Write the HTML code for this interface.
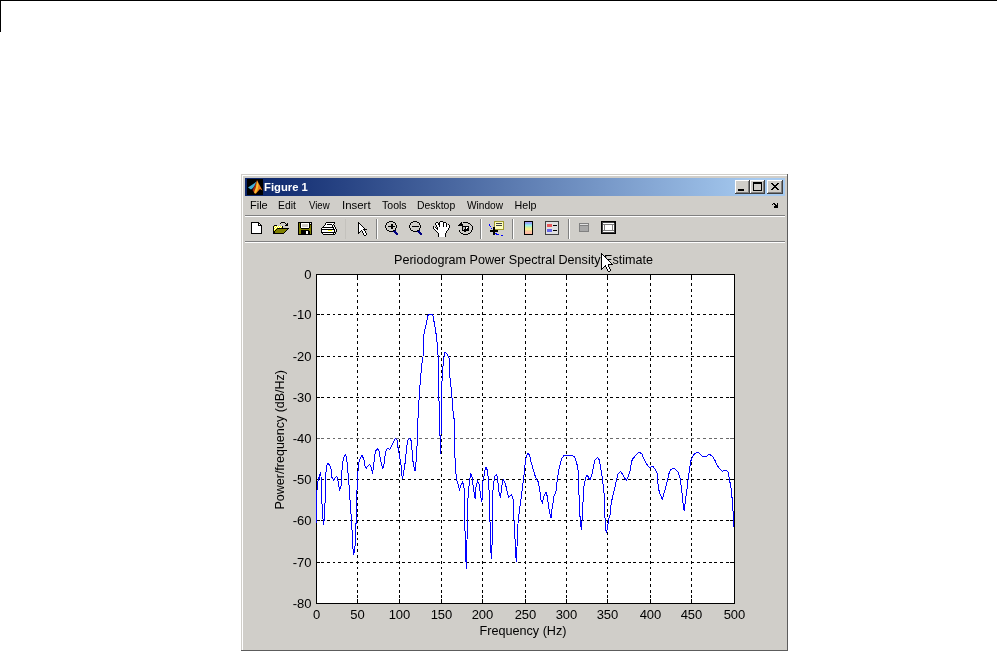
<!DOCTYPE html>
<html><head><meta charset="utf-8">
<style>
html,body{margin:0;padding:0;background:#fff;width:997px;height:651px;overflow:hidden;font-family:"Liberation Sans",sans-serif;}
svg{position:absolute;left:0;top:0;will-change:transform;}
</style></head><body>
<svg width="997" height="651" viewBox="0 0 997 651">
<rect x="0" y="0" width="997" height="1" fill="#000"/>
<rect x="0" y="0" width="1" height="32" fill="#000"/>
<rect x="241" y="174" width="547" height="477" fill="#d0cec9"/>
<rect x="242" y="175" width="545" height="1" fill="#fff"/>
<rect x="242" y="175" width="1" height="475" fill="#fff"/>
<rect x="787" y="174" width="1" height="477" fill="#5c5c5c"/>
<rect x="241" y="650" width="547" height="1" fill="#5c5c5c"/>
<defs><linearGradient id="tg" x1="0" x2="1" y1="0" y2="0"><stop offset="0" stop-color="#0a246a"/><stop offset="0.95" stop-color="#a6caf0"/><stop offset="1" stop-color="#a6caf0"/></linearGradient></defs>
<rect x="245" y="178" width="540" height="18" fill="url(#tg)"/>
<rect x="247" y="179" width="16" height="16" fill="#000"/>
<path d="M248 187.5 L251 185.5 L254 183.5 L256.5 181.5 L255.5 184.5 L253 188 L251 189.5 Z" fill="#40b0d8"/>
<path d="M257 180 L255 185 L252.5 190 L254.5 193.5 L256 188 Z" fill="#a82810"/>
<path d="M257 180 L259 184 L262.5 190.5 L260 189 L256 193.5 L254.5 193.5 L256 188 Z" fill="#f07818"/>
<path d="M257 181 L258.5 185 L257.5 190 L255.5 193.5 L254 192.5 L256 187 Z" fill="#f8c030"/>
<rect x="735" y="180" width="15" height="14" fill="#d0cec9"/>
<rect x="735" y="180" width="14" height="1" fill="#fff"/>
<rect x="735" y="180" width="1" height="13" fill="#fff"/>
<rect x="749" y="180" width="1" height="14" fill="#404040"/>
<rect x="735" y="193" width="15" height="1" fill="#404040"/>
<rect x="748" y="181" width="1" height="12" fill="#808080"/>
<rect x="736" y="192" width="13" height="1" fill="#808080"/>
<rect x="750" y="180" width="15" height="14" fill="#d0cec9"/>
<rect x="750" y="180" width="14" height="1" fill="#fff"/>
<rect x="750" y="180" width="1" height="13" fill="#fff"/>
<rect x="764" y="180" width="1" height="14" fill="#404040"/>
<rect x="750" y="193" width="15" height="1" fill="#404040"/>
<rect x="763" y="181" width="1" height="12" fill="#808080"/>
<rect x="751" y="192" width="13" height="1" fill="#808080"/>
<rect x="767" y="180" width="16" height="14" fill="#d0cec9"/>
<rect x="767" y="180" width="15" height="1" fill="#fff"/>
<rect x="767" y="180" width="1" height="13" fill="#fff"/>
<rect x="782" y="180" width="1" height="14" fill="#404040"/>
<rect x="767" y="193" width="16" height="1" fill="#404040"/>
<rect x="781" y="181" width="1" height="12" fill="#808080"/>
<rect x="768" y="192" width="14" height="1" fill="#808080"/>
<rect x="245" y="215" width="540" height="1" fill="#808080"/>
<rect x="245" y="216" width="540" height="1" fill="#fff"/>
<rect x="245" y="241" width="540" height="1" fill="#808080"/>
<rect x="245" y="242" width="540" height="1" fill="#fff"/>
<rect x="345" y="219" width="1" height="20" fill="#c4c2bd"/>
<rect x="376" y="219" width="1" height="20" fill="#808080"/>
<rect x="377" y="219" width="1" height="20" fill="#fff"/>
<rect x="480" y="219" width="1" height="20" fill="#808080"/>
<rect x="481" y="219" width="1" height="20" fill="#fff"/>
<rect x="512" y="219" width="1" height="20" fill="#808080"/>
<rect x="513" y="219" width="1" height="20" fill="#fff"/>
<rect x="568" y="219" width="1" height="20" fill="#808080"/>
<rect x="569" y="219" width="1" height="20" fill="#fff"/>
<rect x="316" y="274" width="419" height="330" fill="#fff"/>
<path d="M317 438h3v1h-3zM321 438h3v1h-3zM327 438h3v1h-3zM333 438h2v1h-2zM338 438h3v1h-3zM344 438h3v1h-3zM350 438h3v1h-3zM356 438h3v1h-3zM362 438h2v1h-2zM367 438h3v1h-3zM373 438h3v1h-3zM379 438h3v1h-3zM385 438h3v1h-3zM390 438h3v1h-3zM396 438h3v1h-3zM402 438h3v1h-3zM408 438h3v1h-3zM414 438h2v1h-2zM419 438h3v1h-3zM425 438h3v1h-3zM431 438h3v1h-3zM437 438h3v1h-3zM443 438h2v1h-2zM448 438h3v1h-3zM454 438h3v1h-3zM460 438h3v1h-3zM466 438h3v1h-3zM471 438h3v1h-3zM477 438h3v1h-3zM483 438h3v1h-3zM489 438h3v1h-3zM495 438h2v1h-2zM500 438h3v1h-3zM506 438h3v1h-3zM512 438h3v1h-3zM518 438h3v1h-3zM524 438h2v1h-2zM529 438h3v1h-3zM535 438h3v1h-3zM541 438h3v1h-3zM547 438h3v1h-3zM552 438h3v1h-3zM558 438h3v1h-3zM564 438h3v1h-3zM570 438h3v1h-3zM576 438h2v1h-2zM581 438h3v1h-3zM587 438h3v1h-3zM593 438h3v1h-3zM599 438h3v1h-3zM605 438h2v1h-2zM610 438h3v1h-3zM616 438h3v1h-3zM622 438h3v1h-3zM628 438h3v1h-3zM633 438h3v1h-3zM639 438h3v1h-3zM645 438h3v1h-3zM651 438h3v1h-3zM657 438h2v1h-2zM662 438h3v1h-3zM668 438h3v1h-3zM674 438h3v1h-3zM680 438h3v1h-3zM686 438h2v1h-2zM691 438h3v1h-3zM697 438h3v1h-3zM703 438h3v1h-3zM709 438h3v1h-3zM714 438h3v1h-3zM720 438h3v1h-3zM726 438h3v1h-3zM730 438h4v1h-4z" fill="#6a6a6a"/>
<path d="M357 275h1v5h-1zM357 283h1v3h-1zM357 289h1v3h-1zM357 295h1v2h-1zM357 300h1v3h-1zM357 306h1v3h-1zM357 312h1v3h-1zM357 318h1v3h-1zM357 324h1v2h-1zM357 329h1v3h-1zM357 335h1v3h-1zM357 341h1v3h-1zM357 347h1v3h-1zM357 352h1v3h-1zM357 358h1v3h-1zM357 364h1v3h-1zM357 370h1v3h-1zM357 376h1v2h-1zM357 381h1v3h-1zM357 387h1v3h-1zM357 393h1v3h-1zM357 399h1v3h-1zM357 405h1v2h-1zM357 410h1v3h-1zM357 416h1v3h-1zM357 422h1v3h-1zM357 428h1v3h-1zM357 433h1v3h-1zM357 439h1v3h-1zM357 445h1v3h-1zM357 451h1v3h-1zM357 457h1v2h-1zM357 462h1v3h-1zM357 468h1v3h-1zM357 474h1v3h-1zM357 480h1v3h-1zM357 486h1v2h-1zM357 491h1v3h-1zM357 497h1v3h-1zM357 503h1v3h-1zM357 509h1v3h-1zM357 514h1v3h-1zM357 520h1v3h-1zM357 526h1v3h-1zM357 532h1v3h-1zM357 538h1v2h-1zM357 543h1v3h-1zM357 549h1v3h-1zM357 555h1v3h-1zM357 561h1v3h-1zM357 567h1v2h-1zM357 572h1v3h-1zM357 578h1v3h-1zM357 584h1v3h-1zM357 590h1v3h-1zM357 595h1v3h-1zM357 599h1v4h-1zM399 275h1v5h-1zM399 283h1v3h-1zM399 289h1v3h-1zM399 295h1v2h-1zM399 300h1v3h-1zM399 306h1v3h-1zM399 312h1v3h-1zM399 318h1v3h-1zM399 324h1v2h-1zM399 329h1v3h-1zM399 335h1v3h-1zM399 341h1v3h-1zM399 347h1v3h-1zM399 352h1v3h-1zM399 358h1v3h-1zM399 364h1v3h-1zM399 370h1v3h-1zM399 376h1v2h-1zM399 381h1v3h-1zM399 387h1v3h-1zM399 393h1v3h-1zM399 399h1v3h-1zM399 405h1v2h-1zM399 410h1v3h-1zM399 416h1v3h-1zM399 422h1v3h-1zM399 428h1v3h-1zM399 433h1v3h-1zM399 439h1v3h-1zM399 445h1v3h-1zM399 451h1v3h-1zM399 457h1v2h-1zM399 462h1v3h-1zM399 468h1v3h-1zM399 474h1v3h-1zM399 480h1v3h-1zM399 486h1v2h-1zM399 491h1v3h-1zM399 497h1v3h-1zM399 503h1v3h-1zM399 509h1v3h-1zM399 514h1v3h-1zM399 520h1v3h-1zM399 526h1v3h-1zM399 532h1v3h-1zM399 538h1v2h-1zM399 543h1v3h-1zM399 549h1v3h-1zM399 555h1v3h-1zM399 561h1v3h-1zM399 567h1v2h-1zM399 572h1v3h-1zM399 578h1v3h-1zM399 584h1v3h-1zM399 590h1v3h-1zM399 595h1v3h-1zM399 599h1v4h-1zM441 275h1v5h-1zM441 283h1v3h-1zM441 289h1v3h-1zM441 295h1v2h-1zM441 300h1v3h-1zM441 306h1v3h-1zM441 312h1v3h-1zM441 318h1v3h-1zM441 324h1v2h-1zM441 329h1v3h-1zM441 335h1v3h-1zM441 341h1v3h-1zM441 347h1v3h-1zM441 352h1v3h-1zM441 358h1v3h-1zM441 364h1v3h-1zM441 370h1v3h-1zM441 376h1v2h-1zM441 381h1v3h-1zM441 387h1v3h-1zM441 393h1v3h-1zM441 399h1v3h-1zM441 405h1v2h-1zM441 410h1v3h-1zM441 416h1v3h-1zM441 422h1v3h-1zM441 428h1v3h-1zM441 433h1v3h-1zM441 439h1v3h-1zM441 445h1v3h-1zM441 451h1v3h-1zM441 457h1v2h-1zM441 462h1v3h-1zM441 468h1v3h-1zM441 474h1v3h-1zM441 480h1v3h-1zM441 486h1v2h-1zM441 491h1v3h-1zM441 497h1v3h-1zM441 503h1v3h-1zM441 509h1v3h-1zM441 514h1v3h-1zM441 520h1v3h-1zM441 526h1v3h-1zM441 532h1v3h-1zM441 538h1v2h-1zM441 543h1v3h-1zM441 549h1v3h-1zM441 555h1v3h-1zM441 561h1v3h-1zM441 567h1v2h-1zM441 572h1v3h-1zM441 578h1v3h-1zM441 584h1v3h-1zM441 590h1v3h-1zM441 595h1v3h-1zM441 599h1v4h-1zM482 275h1v5h-1zM482 283h1v3h-1zM482 289h1v3h-1zM482 295h1v2h-1zM482 300h1v3h-1zM482 306h1v3h-1zM482 312h1v3h-1zM482 318h1v3h-1zM482 324h1v2h-1zM482 329h1v3h-1zM482 335h1v3h-1zM482 341h1v3h-1zM482 347h1v3h-1zM482 352h1v3h-1zM482 358h1v3h-1zM482 364h1v3h-1zM482 370h1v3h-1zM482 376h1v2h-1zM482 381h1v3h-1zM482 387h1v3h-1zM482 393h1v3h-1zM482 399h1v3h-1zM482 405h1v2h-1zM482 410h1v3h-1zM482 416h1v3h-1zM482 422h1v3h-1zM482 428h1v3h-1zM482 433h1v3h-1zM482 439h1v3h-1zM482 445h1v3h-1zM482 451h1v3h-1zM482 457h1v2h-1zM482 462h1v3h-1zM482 468h1v3h-1zM482 474h1v3h-1zM482 480h1v3h-1zM482 486h1v2h-1zM482 491h1v3h-1zM482 497h1v3h-1zM482 503h1v3h-1zM482 509h1v3h-1zM482 514h1v3h-1zM482 520h1v3h-1zM482 526h1v3h-1zM482 532h1v3h-1zM482 538h1v2h-1zM482 543h1v3h-1zM482 549h1v3h-1zM482 555h1v3h-1zM482 561h1v3h-1zM482 567h1v2h-1zM482 572h1v3h-1zM482 578h1v3h-1zM482 584h1v3h-1zM482 590h1v3h-1zM482 595h1v3h-1zM482 599h1v4h-1zM525 275h1v5h-1zM525 283h1v3h-1zM525 289h1v3h-1zM525 295h1v2h-1zM525 300h1v3h-1zM525 306h1v3h-1zM525 312h1v3h-1zM525 318h1v3h-1zM525 324h1v2h-1zM525 329h1v3h-1zM525 335h1v3h-1zM525 341h1v3h-1zM525 347h1v3h-1zM525 352h1v3h-1zM525 358h1v3h-1zM525 364h1v3h-1zM525 370h1v3h-1zM525 376h1v2h-1zM525 381h1v3h-1zM525 387h1v3h-1zM525 393h1v3h-1zM525 399h1v3h-1zM525 405h1v2h-1zM525 410h1v3h-1zM525 416h1v3h-1zM525 422h1v3h-1zM525 428h1v3h-1zM525 433h1v3h-1zM525 439h1v3h-1zM525 445h1v3h-1zM525 451h1v3h-1zM525 457h1v2h-1zM525 462h1v3h-1zM525 468h1v3h-1zM525 474h1v3h-1zM525 480h1v3h-1zM525 486h1v2h-1zM525 491h1v3h-1zM525 497h1v3h-1zM525 503h1v3h-1zM525 509h1v3h-1zM525 514h1v3h-1zM525 520h1v3h-1zM525 526h1v3h-1zM525 532h1v3h-1zM525 538h1v2h-1zM525 543h1v3h-1zM525 549h1v3h-1zM525 555h1v3h-1zM525 561h1v3h-1zM525 567h1v2h-1zM525 572h1v3h-1zM525 578h1v3h-1zM525 584h1v3h-1zM525 590h1v3h-1zM525 595h1v3h-1zM525 599h1v4h-1zM566 275h1v5h-1zM566 283h1v3h-1zM566 289h1v3h-1zM566 295h1v2h-1zM566 300h1v3h-1zM566 306h1v3h-1zM566 312h1v3h-1zM566 318h1v3h-1zM566 324h1v2h-1zM566 329h1v3h-1zM566 335h1v3h-1zM566 341h1v3h-1zM566 347h1v3h-1zM566 352h1v3h-1zM566 358h1v3h-1zM566 364h1v3h-1zM566 370h1v3h-1zM566 376h1v2h-1zM566 381h1v3h-1zM566 387h1v3h-1zM566 393h1v3h-1zM566 399h1v3h-1zM566 405h1v2h-1zM566 410h1v3h-1zM566 416h1v3h-1zM566 422h1v3h-1zM566 428h1v3h-1zM566 433h1v3h-1zM566 439h1v3h-1zM566 445h1v3h-1zM566 451h1v3h-1zM566 457h1v2h-1zM566 462h1v3h-1zM566 468h1v3h-1zM566 474h1v3h-1zM566 480h1v3h-1zM566 486h1v2h-1zM566 491h1v3h-1zM566 497h1v3h-1zM566 503h1v3h-1zM566 509h1v3h-1zM566 514h1v3h-1zM566 520h1v3h-1zM566 526h1v3h-1zM566 532h1v3h-1zM566 538h1v2h-1zM566 543h1v3h-1zM566 549h1v3h-1zM566 555h1v3h-1zM566 561h1v3h-1zM566 567h1v2h-1zM566 572h1v3h-1zM566 578h1v3h-1zM566 584h1v3h-1zM566 590h1v3h-1zM566 595h1v3h-1zM566 599h1v4h-1zM607 275h1v5h-1zM607 283h1v3h-1zM607 289h1v3h-1zM607 295h1v2h-1zM607 300h1v3h-1zM607 306h1v3h-1zM607 312h1v3h-1zM607 318h1v3h-1zM607 324h1v2h-1zM607 329h1v3h-1zM607 335h1v3h-1zM607 341h1v3h-1zM607 347h1v3h-1zM607 352h1v3h-1zM607 358h1v3h-1zM607 364h1v3h-1zM607 370h1v3h-1zM607 376h1v2h-1zM607 381h1v3h-1zM607 387h1v3h-1zM607 393h1v3h-1zM607 399h1v3h-1zM607 405h1v2h-1zM607 410h1v3h-1zM607 416h1v3h-1zM607 422h1v3h-1zM607 428h1v3h-1zM607 433h1v3h-1zM607 439h1v3h-1zM607 445h1v3h-1zM607 451h1v3h-1zM607 457h1v2h-1zM607 462h1v3h-1zM607 468h1v3h-1zM607 474h1v3h-1zM607 480h1v3h-1zM607 486h1v2h-1zM607 491h1v3h-1zM607 497h1v3h-1zM607 503h1v3h-1zM607 509h1v3h-1zM607 514h1v3h-1zM607 520h1v3h-1zM607 526h1v3h-1zM607 532h1v3h-1zM607 538h1v2h-1zM607 543h1v3h-1zM607 549h1v3h-1zM607 555h1v3h-1zM607 561h1v3h-1zM607 567h1v2h-1zM607 572h1v3h-1zM607 578h1v3h-1zM607 584h1v3h-1zM607 590h1v3h-1zM607 595h1v3h-1zM607 599h1v4h-1zM650 275h1v5h-1zM650 283h1v3h-1zM650 289h1v3h-1zM650 295h1v2h-1zM650 300h1v3h-1zM650 306h1v3h-1zM650 312h1v3h-1zM650 318h1v3h-1zM650 324h1v2h-1zM650 329h1v3h-1zM650 335h1v3h-1zM650 341h1v3h-1zM650 347h1v3h-1zM650 352h1v3h-1zM650 358h1v3h-1zM650 364h1v3h-1zM650 370h1v3h-1zM650 376h1v2h-1zM650 381h1v3h-1zM650 387h1v3h-1zM650 393h1v3h-1zM650 399h1v3h-1zM650 405h1v2h-1zM650 410h1v3h-1zM650 416h1v3h-1zM650 422h1v3h-1zM650 428h1v3h-1zM650 433h1v3h-1zM650 439h1v3h-1zM650 445h1v3h-1zM650 451h1v3h-1zM650 457h1v2h-1zM650 462h1v3h-1zM650 468h1v3h-1zM650 474h1v3h-1zM650 480h1v3h-1zM650 486h1v2h-1zM650 491h1v3h-1zM650 497h1v3h-1zM650 503h1v3h-1zM650 509h1v3h-1zM650 514h1v3h-1zM650 520h1v3h-1zM650 526h1v3h-1zM650 532h1v3h-1zM650 538h1v2h-1zM650 543h1v3h-1zM650 549h1v3h-1zM650 555h1v3h-1zM650 561h1v3h-1zM650 567h1v2h-1zM650 572h1v3h-1zM650 578h1v3h-1zM650 584h1v3h-1zM650 590h1v3h-1zM650 595h1v3h-1zM650 599h1v4h-1zM691 275h1v5h-1zM691 283h1v3h-1zM691 289h1v3h-1zM691 295h1v2h-1zM691 300h1v3h-1zM691 306h1v3h-1zM691 312h1v3h-1zM691 318h1v3h-1zM691 324h1v2h-1zM691 329h1v3h-1zM691 335h1v3h-1zM691 341h1v3h-1zM691 347h1v3h-1zM691 352h1v3h-1zM691 358h1v3h-1zM691 364h1v3h-1zM691 370h1v3h-1zM691 376h1v2h-1zM691 381h1v3h-1zM691 387h1v3h-1zM691 393h1v3h-1zM691 399h1v3h-1zM691 405h1v2h-1zM691 410h1v3h-1zM691 416h1v3h-1zM691 422h1v3h-1zM691 428h1v3h-1zM691 433h1v3h-1zM691 439h1v3h-1zM691 445h1v3h-1zM691 451h1v3h-1zM691 457h1v2h-1zM691 462h1v3h-1zM691 468h1v3h-1zM691 474h1v3h-1zM691 480h1v3h-1zM691 486h1v2h-1zM691 491h1v3h-1zM691 497h1v3h-1zM691 503h1v3h-1zM691 509h1v3h-1zM691 514h1v3h-1zM691 520h1v3h-1zM691 526h1v3h-1zM691 532h1v3h-1zM691 538h1v2h-1zM691 543h1v3h-1zM691 549h1v3h-1zM691 555h1v3h-1zM691 561h1v3h-1zM691 567h1v2h-1zM691 572h1v3h-1zM691 578h1v3h-1zM691 584h1v3h-1zM691 590h1v3h-1zM691 595h1v3h-1zM691 599h1v4h-1zM317 314h3v1h-3zM321 314h3v1h-3zM327 314h3v1h-3zM333 314h2v1h-2zM338 314h3v1h-3zM344 314h3v1h-3zM350 314h3v1h-3zM356 314h3v1h-3zM362 314h2v1h-2zM367 314h3v1h-3zM373 314h3v1h-3zM379 314h3v1h-3zM385 314h3v1h-3zM390 314h3v1h-3zM396 314h3v1h-3zM402 314h3v1h-3zM408 314h3v1h-3zM414 314h2v1h-2zM419 314h3v1h-3zM425 314h3v1h-3zM431 314h3v1h-3zM437 314h3v1h-3zM443 314h2v1h-2zM448 314h3v1h-3zM454 314h3v1h-3zM460 314h3v1h-3zM466 314h3v1h-3zM471 314h3v1h-3zM477 314h3v1h-3zM483 314h3v1h-3zM489 314h3v1h-3zM495 314h2v1h-2zM500 314h3v1h-3zM506 314h3v1h-3zM512 314h3v1h-3zM518 314h3v1h-3zM524 314h2v1h-2zM529 314h3v1h-3zM535 314h3v1h-3zM541 314h3v1h-3zM547 314h3v1h-3zM552 314h3v1h-3zM558 314h3v1h-3zM564 314h3v1h-3zM570 314h3v1h-3zM576 314h2v1h-2zM581 314h3v1h-3zM587 314h3v1h-3zM593 314h3v1h-3zM599 314h3v1h-3zM605 314h2v1h-2zM610 314h3v1h-3zM616 314h3v1h-3zM622 314h3v1h-3zM628 314h3v1h-3zM633 314h3v1h-3zM639 314h3v1h-3zM645 314h3v1h-3zM651 314h3v1h-3zM657 314h2v1h-2zM662 314h3v1h-3zM668 314h3v1h-3zM674 314h3v1h-3zM680 314h3v1h-3zM686 314h2v1h-2zM691 314h3v1h-3zM697 314h3v1h-3zM703 314h3v1h-3zM709 314h3v1h-3zM714 314h3v1h-3zM720 314h3v1h-3zM726 314h3v1h-3zM730 314h4v1h-4zM317 356h3v1h-3zM321 356h3v1h-3zM327 356h3v1h-3zM333 356h2v1h-2zM338 356h3v1h-3zM344 356h3v1h-3zM350 356h3v1h-3zM356 356h3v1h-3zM362 356h2v1h-2zM367 356h3v1h-3zM373 356h3v1h-3zM379 356h3v1h-3zM385 356h3v1h-3zM390 356h3v1h-3zM396 356h3v1h-3zM402 356h3v1h-3zM408 356h3v1h-3zM414 356h2v1h-2zM419 356h3v1h-3zM425 356h3v1h-3zM431 356h3v1h-3zM437 356h3v1h-3zM443 356h2v1h-2zM448 356h3v1h-3zM454 356h3v1h-3zM460 356h3v1h-3zM466 356h3v1h-3zM471 356h3v1h-3zM477 356h3v1h-3zM483 356h3v1h-3zM489 356h3v1h-3zM495 356h2v1h-2zM500 356h3v1h-3zM506 356h3v1h-3zM512 356h3v1h-3zM518 356h3v1h-3zM524 356h2v1h-2zM529 356h3v1h-3zM535 356h3v1h-3zM541 356h3v1h-3zM547 356h3v1h-3zM552 356h3v1h-3zM558 356h3v1h-3zM564 356h3v1h-3zM570 356h3v1h-3zM576 356h2v1h-2zM581 356h3v1h-3zM587 356h3v1h-3zM593 356h3v1h-3zM599 356h3v1h-3zM605 356h2v1h-2zM610 356h3v1h-3zM616 356h3v1h-3zM622 356h3v1h-3zM628 356h3v1h-3zM633 356h3v1h-3zM639 356h3v1h-3zM645 356h3v1h-3zM651 356h3v1h-3zM657 356h2v1h-2zM662 356h3v1h-3zM668 356h3v1h-3zM674 356h3v1h-3zM680 356h3v1h-3zM686 356h2v1h-2zM691 356h3v1h-3zM697 356h3v1h-3zM703 356h3v1h-3zM709 356h3v1h-3zM714 356h3v1h-3zM720 356h3v1h-3zM726 356h3v1h-3zM730 356h4v1h-4zM317 397h3v1h-3zM321 397h3v1h-3zM327 397h3v1h-3zM333 397h2v1h-2zM338 397h3v1h-3zM344 397h3v1h-3zM350 397h3v1h-3zM356 397h3v1h-3zM362 397h2v1h-2zM367 397h3v1h-3zM373 397h3v1h-3zM379 397h3v1h-3zM385 397h3v1h-3zM390 397h3v1h-3zM396 397h3v1h-3zM402 397h3v1h-3zM408 397h3v1h-3zM414 397h2v1h-2zM419 397h3v1h-3zM425 397h3v1h-3zM431 397h3v1h-3zM437 397h3v1h-3zM443 397h2v1h-2zM448 397h3v1h-3zM454 397h3v1h-3zM460 397h3v1h-3zM466 397h3v1h-3zM471 397h3v1h-3zM477 397h3v1h-3zM483 397h3v1h-3zM489 397h3v1h-3zM495 397h2v1h-2zM500 397h3v1h-3zM506 397h3v1h-3zM512 397h3v1h-3zM518 397h3v1h-3zM524 397h2v1h-2zM529 397h3v1h-3zM535 397h3v1h-3zM541 397h3v1h-3zM547 397h3v1h-3zM552 397h3v1h-3zM558 397h3v1h-3zM564 397h3v1h-3zM570 397h3v1h-3zM576 397h2v1h-2zM581 397h3v1h-3zM587 397h3v1h-3zM593 397h3v1h-3zM599 397h3v1h-3zM605 397h2v1h-2zM610 397h3v1h-3zM616 397h3v1h-3zM622 397h3v1h-3zM628 397h3v1h-3zM633 397h3v1h-3zM639 397h3v1h-3zM645 397h3v1h-3zM651 397h3v1h-3zM657 397h2v1h-2zM662 397h3v1h-3zM668 397h3v1h-3zM674 397h3v1h-3zM680 397h3v1h-3zM686 397h2v1h-2zM691 397h3v1h-3zM697 397h3v1h-3zM703 397h3v1h-3zM709 397h3v1h-3zM714 397h3v1h-3zM720 397h3v1h-3zM726 397h3v1h-3zM730 397h4v1h-4zM317 479h3v1h-3zM321 479h3v1h-3zM327 479h3v1h-3zM333 479h2v1h-2zM338 479h3v1h-3zM344 479h3v1h-3zM350 479h3v1h-3zM356 479h3v1h-3zM362 479h2v1h-2zM367 479h3v1h-3zM373 479h3v1h-3zM379 479h3v1h-3zM385 479h3v1h-3zM390 479h3v1h-3zM396 479h3v1h-3zM402 479h3v1h-3zM408 479h3v1h-3zM414 479h2v1h-2zM419 479h3v1h-3zM425 479h3v1h-3zM431 479h3v1h-3zM437 479h3v1h-3zM443 479h2v1h-2zM448 479h3v1h-3zM454 479h3v1h-3zM460 479h3v1h-3zM466 479h3v1h-3zM471 479h3v1h-3zM477 479h3v1h-3zM483 479h3v1h-3zM489 479h3v1h-3zM495 479h2v1h-2zM500 479h3v1h-3zM506 479h3v1h-3zM512 479h3v1h-3zM518 479h3v1h-3zM524 479h2v1h-2zM529 479h3v1h-3zM535 479h3v1h-3zM541 479h3v1h-3zM547 479h3v1h-3zM552 479h3v1h-3zM558 479h3v1h-3zM564 479h3v1h-3zM570 479h3v1h-3zM576 479h2v1h-2zM581 479h3v1h-3zM587 479h3v1h-3zM593 479h3v1h-3zM599 479h3v1h-3zM605 479h2v1h-2zM610 479h3v1h-3zM616 479h3v1h-3zM622 479h3v1h-3zM628 479h3v1h-3zM633 479h3v1h-3zM639 479h3v1h-3zM645 479h3v1h-3zM651 479h3v1h-3zM657 479h2v1h-2zM662 479h3v1h-3zM668 479h3v1h-3zM674 479h3v1h-3zM680 479h3v1h-3zM686 479h2v1h-2zM691 479h3v1h-3zM697 479h3v1h-3zM703 479h3v1h-3zM709 479h3v1h-3zM714 479h3v1h-3zM720 479h3v1h-3zM726 479h3v1h-3zM730 479h4v1h-4zM317 520h3v1h-3zM321 520h3v1h-3zM327 520h3v1h-3zM333 520h2v1h-2zM338 520h3v1h-3zM344 520h3v1h-3zM350 520h3v1h-3zM356 520h3v1h-3zM362 520h2v1h-2zM367 520h3v1h-3zM373 520h3v1h-3zM379 520h3v1h-3zM385 520h3v1h-3zM390 520h3v1h-3zM396 520h3v1h-3zM402 520h3v1h-3zM408 520h3v1h-3zM414 520h2v1h-2zM419 520h3v1h-3zM425 520h3v1h-3zM431 520h3v1h-3zM437 520h3v1h-3zM443 520h2v1h-2zM448 520h3v1h-3zM454 520h3v1h-3zM460 520h3v1h-3zM466 520h3v1h-3zM471 520h3v1h-3zM477 520h3v1h-3zM483 520h3v1h-3zM489 520h3v1h-3zM495 520h2v1h-2zM500 520h3v1h-3zM506 520h3v1h-3zM512 520h3v1h-3zM518 520h3v1h-3zM524 520h2v1h-2zM529 520h3v1h-3zM535 520h3v1h-3zM541 520h3v1h-3zM547 520h3v1h-3zM552 520h3v1h-3zM558 520h3v1h-3zM564 520h3v1h-3zM570 520h3v1h-3zM576 520h2v1h-2zM581 520h3v1h-3zM587 520h3v1h-3zM593 520h3v1h-3zM599 520h3v1h-3zM605 520h2v1h-2zM610 520h3v1h-3zM616 520h3v1h-3zM622 520h3v1h-3zM628 520h3v1h-3zM633 520h3v1h-3zM639 520h3v1h-3zM645 520h3v1h-3zM651 520h3v1h-3zM657 520h2v1h-2zM662 520h3v1h-3zM668 520h3v1h-3zM674 520h3v1h-3zM680 520h3v1h-3zM686 520h2v1h-2zM691 520h3v1h-3zM697 520h3v1h-3zM703 520h3v1h-3zM709 520h3v1h-3zM714 520h3v1h-3zM720 520h3v1h-3zM726 520h3v1h-3zM730 520h4v1h-4zM317 562h3v1h-3zM321 562h3v1h-3zM327 562h3v1h-3zM333 562h2v1h-2zM338 562h3v1h-3zM344 562h3v1h-3zM350 562h3v1h-3zM356 562h3v1h-3zM362 562h2v1h-2zM367 562h3v1h-3zM373 562h3v1h-3zM379 562h3v1h-3zM385 562h3v1h-3zM390 562h3v1h-3zM396 562h3v1h-3zM402 562h3v1h-3zM408 562h3v1h-3zM414 562h2v1h-2zM419 562h3v1h-3zM425 562h3v1h-3zM431 562h3v1h-3zM437 562h3v1h-3zM443 562h2v1h-2zM448 562h3v1h-3zM454 562h3v1h-3zM460 562h3v1h-3zM466 562h3v1h-3zM471 562h3v1h-3zM477 562h3v1h-3zM483 562h3v1h-3zM489 562h3v1h-3zM495 562h2v1h-2zM500 562h3v1h-3zM506 562h3v1h-3zM512 562h3v1h-3zM518 562h3v1h-3zM524 562h2v1h-2zM529 562h3v1h-3zM535 562h3v1h-3zM541 562h3v1h-3zM547 562h3v1h-3zM552 562h3v1h-3zM558 562h3v1h-3zM564 562h3v1h-3zM570 562h3v1h-3zM576 562h2v1h-2zM581 562h3v1h-3zM587 562h3v1h-3zM593 562h3v1h-3zM599 562h3v1h-3zM605 562h2v1h-2zM610 562h3v1h-3zM616 562h3v1h-3zM622 562h3v1h-3zM628 562h3v1h-3zM633 562h3v1h-3zM639 562h3v1h-3zM645 562h3v1h-3zM651 562h3v1h-3zM657 562h2v1h-2zM662 562h3v1h-3zM668 562h3v1h-3zM674 562h3v1h-3zM680 562h3v1h-3zM686 562h2v1h-2zM691 562h3v1h-3zM697 562h3v1h-3zM703 562h3v1h-3zM709 562h3v1h-3zM714 562h3v1h-3zM720 562h3v1h-3zM726 562h3v1h-3zM730 562h4v1h-4z" fill="#000"/>
<path d="M316 274h419v1h-419z M316 603h419v1h-419z M316 274h1v330h-1z M734 274h1v330h-1z" fill="#000"/>
<polyline points="316,524 317,490 318,481 319,477 319.6,479 320.2,472 321,476 321.3,490 322.3,510 323.5,524.5 324.6,516 325.2,498 325.6,488 326,472 327,465 328,463 329.5,465 331,469 331.7,477 333.7,480 335,478 336.4,476.5 337.5,478 338.3,483 339.5,490 341,486 342.5,463 343.6,458 345.2,454.2 346.7,457.7 347.5,469 348.6,477.7 349.4,492 350.6,508 351.7,524 352.9,547.8 353.4,554.7 354.6,551.8 355.7,536.8 356.3,511.5 356.9,492.5 357.5,478 358.6,463 360.2,458.5 362,455.4 363.8,459 364.8,465.6 366.1,468.3 367.5,466.5 369.4,464.6 370.8,465.5 371.7,470 372.3,472.5 373.5,468.3 374.4,457.3 375.8,450.8 377.7,448.5 379,450.8 380,457.3 381.4,463.7 382.7,469.2 384.1,463.7 385.5,452.6 386.4,449.4 387.8,448.5 389.6,449.4 391.5,446.2 393.3,442.5 394.7,439.3 395.6,438.4 397,439.7 397.9,447 399.3,454.5 400.2,460 401.2,466.5 402.1,477.5 402.6,478.5 403.5,473 404.9,464.6 406.2,452.6 407.2,443.4 408.1,439.7 410,438.4 411.3,441 412.4,454.6 413.3,464.8 415.1,471.2 416.5,456.5 417.4,438 417.9,420 418.8,404.2 419.7,388.6 420.7,377 421.6,366.5 422.3,360 423,357.5 423.4,335.4 424.4,332.6 425.3,327.1 426.7,322.5 427.6,316 429,314.2 431.7,314.2 433.1,316 434.5,324.4 435.9,332.6 436.8,340 437.7,350.2 438.4,362 438.6,387.6 439.6,420 440.5,453.7 441.4,420 441.9,383 442.8,368.3 443.5,360 444.6,353 445.6,352.5 447.4,354.8 449.2,358.5 449.7,374.7 450.6,383 451.5,392.3 452.5,404.2 453.4,415.3 454.3,420 454.5,448.3 455.4,464.9 456.3,478.7 457.7,483.3 459.5,489.3 460.9,485.2 462.3,482 463.7,485.2 464.6,493.5 465.2,546.6 466.4,568.7 467,540.5 467.7,501 468.3,495 469.2,484.2 470.1,476.9 471,473.6 472,476.9 472.9,484.2 474.3,493.5 475.2,498.5 476.1,486 477.5,481 478.9,483.3 480.3,492.5 481.5,502 482.6,497 483,481.5 484.4,474 485.3,467.6 486.7,467.2 487.6,474 488.6,479.6 489.2,495 490.4,534.3 491.2,558.9 492.2,541.7 492.5,495 493.2,488 494.5,476.9 496.4,474.5 497.3,476.3 498.2,484.6 499.1,492.9 500.5,497.5 501.5,488.3 502.4,481.9 503.3,480 504.7,481.9 505.6,484.6 507,491.1 508.8,497.5 509.7,496.6 511.4,494.8 512.5,497.5 513.3,500 513.8,516.7 514.9,534.4 515.4,552.7 516.5,561.8 517,547.3 517.6,528 518.7,516.1 520.3,504.3 521.3,496.6 522.6,486.5 523.6,478.2 524.5,470.8 525.4,460.7 526.3,456.1 528.2,453.3 529.6,455.1 531,461.6 532.8,468 534.6,474.5 536.5,479.1 538.3,481.9 539.2,487.4 540.2,492.9 541.1,500.3 542.4,502.4 543.6,497 544.3,494.8 546,492.5 547.4,496.6 548.5,506.5 550,514.2 551.1,518 551.9,509.6 553.4,501.1 553.8,496.6 556.1,491.1 557,481.9 558,475.4 559.4,467.1 560.3,463.4 561.7,458.4 564,455.6 567.6,455.6 572.3,455.6 574.6,457 576.4,462.5 577.8,467.1 578.7,479.1 579.2,504 580.3,521.1 581.5,530.3 582.6,510.4 583.4,495 583.8,487.4 585.2,480 586.5,475.4 587.6,475.4 588.7,478.2 590.1,479.6 591.9,474.5 593.3,468 594.7,460.7 597.4,457.4 599.3,459.7 600.7,468 602.1,476.3 603,483.7 604.2,495 605.4,529.6 606.5,531.5 607.7,528 608.4,519.6 610.4,513.4 610.7,506.5 612.3,498.1 612.6,496.6 615,487.4 616.3,480 618.2,473.6 620.5,471.7 622.8,474.5 624.6,478.2 626.5,480 628.3,476.3 630.2,470.8 631.5,461.6 632.9,458.8 635.1,456.1 637.4,453.3 639.7,452.4 642,454.2 644.7,460.7 647.5,465.3 649.8,467.6 653,466.2 654.9,469 657.2,473.6 657.6,480 658.6,489.2 660.4,494.8 662.3,499.4 664.1,492.9 665.9,486.5 667.8,479.1 669.2,472.6 670.6,469.9 673.3,468.5 675.2,469 678.3,472.3 680.1,478.7 681.5,487.9 682.2,495 683.6,508.7 684.3,510.7 685.3,501.7 686.4,493.5 687.1,487.9 688.4,476.9 689.8,467.6 690.7,461.2 692.6,456.6 694.4,453.8 697.7,452 700,453.8 702.7,456.6 706,456.6 709.2,454.3 712,455.7 714.7,459.8 717,464.9 719.3,468.6 722.5,471.3 725.8,470 728.1,472.3 729.5,479.6 731.3,490 732.7,504.5 733.4,518.3 734,527.3" fill="none" stroke="#0000ff" stroke-width="1" shape-rendering="crispEdges"/>
<g font-family="Liberation Sans" font-size="13" fill="#000"><text x="311.5" y="279" text-anchor="end">0</text><text x="311.5" y="319" text-anchor="end">-10</text><text x="311.5" y="361" text-anchor="end">-20</text><text x="311.5" y="402" text-anchor="end">-30</text><text x="311.5" y="443" text-anchor="end">-40</text><text x="311.5" y="484" text-anchor="end">-50</text><text x="311.5" y="525" text-anchor="end">-60</text><text x="311.5" y="567" text-anchor="end">-70</text><text x="311.5" y="608" text-anchor="end">-80</text><text x="316.5" y="618.5" text-anchor="middle">0</text><text x="357.5" y="618.5" text-anchor="middle">50</text><text x="399.5" y="618.5" text-anchor="middle">100</text><text x="441.5" y="618.5" text-anchor="middle">150</text><text x="482.5" y="618.5" text-anchor="middle">200</text><text x="525.5" y="618.5" text-anchor="middle">250</text><text x="566.5" y="618.5" text-anchor="middle">300</text><text x="607.5" y="618.5" text-anchor="middle">350</text><text x="650.5" y="618.5" text-anchor="middle">400</text><text x="691.5" y="618.5" text-anchor="middle">450</text><text x="734.5" y="618.5" text-anchor="middle">500</text></g>
<text transform="translate(284 509.5) rotate(-90)" font-family="Liberation Sans" font-size="13.5" textLength="139.5" lengthAdjust="spacingAndGlyphs" fill="#000">Power/frequency (dB/Hz)</text>
<text x="394" y="263.5" font-family="Liberation Sans" font-size="13.5" textLength="259" lengthAdjust="spacingAndGlyphs" fill="#000">Periodogram Power Spectral Density Estimate</text>
<text x="479.5" y="634.5" font-family="Liberation Sans" font-size="13.5" textLength="87" lengthAdjust="spacingAndGlyphs" fill="#000">Frequency (Hz)</text>
<text x="264" y="191" font-family="Liberation Sans" font-size="11" font-weight="bold" textLength="43.8" lengthAdjust="spacingAndGlyphs" fill="#fff">Figure 1</text>
<g font-family="Liberation Sans" font-size="11" fill="#000"><text x="250" y="209" textLength="17.73" lengthAdjust="spacingAndGlyphs">File</text><text x="278" y="209" textLength="17.85" lengthAdjust="spacingAndGlyphs">Edit</text><text x="309" y="209" textLength="20.6" lengthAdjust="spacingAndGlyphs">View</text><text x="342" y="209" textLength="28.6" lengthAdjust="spacingAndGlyphs">Insert</text><text x="382" y="209" textLength="24.6" lengthAdjust="spacingAndGlyphs">Tools</text><text x="417" y="209" textLength="38.2" lengthAdjust="spacingAndGlyphs">Desktop</text><text x="467" y="209" textLength="36.0" lengthAdjust="spacingAndGlyphs">Window</text><text x="514.5" y="209" textLength="22" lengthAdjust="spacingAndGlyphs">Help</text></g>
<path fill="#000000" d="M251 222h8v1h-8zM251 223h1v1h-1zM258 223h2v1h-2zM251 224h1v1h-1zM258 224h1v1h-1zM260 224h1v1h-1zM251 225h1v1h-1zM258 225h4v1h-4zM251 226h1v1h-1zM261 226h1v1h-1zM251 227h1v1h-1zM261 227h1v1h-1zM251 228h1v1h-1zM261 228h1v1h-1zM251 229h1v1h-1zM261 229h1v1h-1zM251 230h1v1h-1zM261 230h1v1h-1zM251 231h1v1h-1zM261 231h1v1h-1zM251 232h1v1h-1zM261 232h1v1h-1zM251 233h11v1h-11zM281 222h4v1h-4zM280 223h1v1h-1zM285 223h1v1h-1zM287 223h1v1h-1zM286 224h2v1h-2zM274 225h3v1h-3zM285 225h3v1h-3zM273 226h1v1h-1zM282 226h1v1h-1zM273 227h1v1h-1zM282 227h1v1h-1zM273 228h1v1h-1zM277 228h12v1h-12zM273 229h1v1h-1zM276 229h1v1h-1zM287 229h1v1h-1zM273 230h1v1h-1zM275 230h1v1h-1zM286 230h1v1h-1zM273 231h2v1h-2zM285 231h1v1h-1zM273 232h2v1h-2zM284 232h1v1h-1zM273 233h11v1h-11zM298 222h14v1h-14zM298 223h1v1h-1zM300 223h1v1h-1zM309 223h1v1h-1zM311 223h1v1h-1zM298 224h1v1h-1zM300 224h1v1h-1zM309 224h3v1h-3zM298 225h1v1h-1zM300 225h1v1h-1zM309 225h1v1h-1zM311 225h1v1h-1zM298 226h1v1h-1zM300 226h1v1h-1zM309 226h1v1h-1zM311 226h1v1h-1zM298 227h1v1h-1zM300 227h1v1h-1zM309 227h1v1h-1zM311 227h1v1h-1zM298 228h1v1h-1zM301 228h8v1h-8zM311 228h1v1h-1zM298 229h1v1h-1zM311 229h1v1h-1zM298 230h1v1h-1zM301 230h8v1h-8zM311 230h1v1h-1zM298 231h1v1h-1zM301 231h5v1h-5zM308 231h2v1h-2zM311 231h1v1h-1zM298 232h1v1h-1zM301 232h5v1h-5zM308 232h2v1h-2zM311 232h1v1h-1zM298 233h1v1h-1zM301 233h5v1h-5zM308 233h2v1h-2zM311 233h1v1h-1zM298 234h14v1h-14zM326 222h9v1h-9zM325 223h1v1h-1zM334 223h1v1h-1zM325 224h1v1h-1zM327 224h5v1h-5zM333 224h1v1h-1zM324 225h1v1h-1zM332 225h1v1h-1zM334 225h1v1h-1zM323 226h1v1h-1zM332 226h1v1h-1zM334 226h1v1h-1zM322 227h12v1h-12zM335 227h1v1h-1zM321 228h1v1h-1zM333 228h1v1h-1zM335 228h1v1h-1zM321 229h14v1h-14zM336 229h1v1h-1zM321 230h1v1h-1zM334 230h1v1h-1zM336 230h1v1h-1zM321 231h1v1h-1zM334 231h1v1h-1zM336 231h1v1h-1zM321 232h15v1h-15zM322 233h1v1h-1zM333 233h1v1h-1zM335 233h1v1h-1zM323 234h12v1h-12zM358 222h1v1h-1zM358 223h2v1h-2zM358 224h1v1h-1zM360 224h1v1h-1zM358 225h1v1h-1zM361 225h1v1h-1zM358 226h1v1h-1zM362 226h1v1h-1zM358 227h1v1h-1zM363 227h1v1h-1zM358 228h1v1h-1zM364 228h1v1h-1zM358 229h1v1h-1zM363 229h4v1h-4zM358 230h1v1h-1zM361 230h1v1h-1zM364 230h1v1h-1zM358 231h1v1h-1zM360 231h1v1h-1zM362 231h1v1h-1zM365 231h1v1h-1zM358 232h2v1h-2zM362 232h1v1h-1zM365 232h1v1h-1zM358 233h1v1h-1zM363 233h1v1h-1zM366 233h1v1h-1zM363 234h1v1h-1zM366 234h1v1h-1zM364 235h2v1h-2zM389 221h4v1h-4zM387 222h2v1h-2zM393 222h2v1h-2zM386 223h1v1h-1zM395 223h1v1h-1zM386 224h1v1h-1zM391 224h2v1h-2zM395 224h1v1h-1zM385 225h1v1h-1zM391 225h2v1h-2zM396 225h1v1h-1zM385 226h1v1h-1zM388 226h7v1h-7zM396 226h1v1h-1zM385 227h1v1h-1zM391 227h2v1h-2zM396 227h1v1h-1zM386 228h1v1h-1zM391 228h2v1h-2zM395 228h1v1h-1zM386 229h1v1h-1zM395 229h1v1h-1zM387 230h2v1h-2zM393 230h2v1h-2zM389 231h4v1h-4zM413 221h4v1h-4zM411 222h2v1h-2zM417 222h2v1h-2zM410 223h1v1h-1zM419 223h1v1h-1zM410 224h1v1h-1zM419 224h1v1h-1zM409 225h1v1h-1zM420 225h1v1h-1zM409 226h1v1h-1zM412 226h7v1h-7zM420 226h1v1h-1zM409 227h1v1h-1zM420 227h1v1h-1zM410 228h1v1h-1zM419 228h1v1h-1zM410 229h1v1h-1zM419 229h1v1h-1zM411 230h2v1h-2zM417 230h2v1h-2zM413 231h4v1h-4zM440 221h3v1h-3zM436 222h2v1h-2zM439 222h1v1h-1zM443 222h3v1h-3zM435 223h1v1h-1zM438 223h2v1h-2zM443 223h1v1h-1zM446 223h1v1h-1zM435 224h1v1h-1zM438 224h2v1h-2zM443 224h1v1h-1zM446 224h1v1h-1zM448 224h1v1h-1zM436 225h1v1h-1zM439 225h1v1h-1zM443 225h1v1h-1zM446 225h1v1h-1zM449 225h1v1h-1zM433 226h1v1h-1zM436 226h1v1h-1zM439 226h1v1h-1zM443 226h1v1h-1zM446 226h1v1h-1zM449 226h1v1h-1zM433 227h1v1h-1zM435 227h1v1h-1zM437 227h1v1h-1zM449 227h1v1h-1zM433 228h1v1h-1zM436 228h2v1h-2zM448 228h1v1h-1zM434 229h1v1h-1zM437 229h1v1h-1zM448 229h1v1h-1zM435 230h1v1h-1zM447 230h1v1h-1zM436 231h1v1h-1zM446 231h1v1h-1zM437 232h1v1h-1zM446 232h1v1h-1zM438 233h1v1h-1zM445 233h1v1h-1zM438 234h1v1h-1zM445 234h1v1h-1zM438 235h1v1h-1zM445 235h1v1h-1zM438 236h1v1h-1zM445 236h1v1h-1zM461 222h1v1h-1zM463 222h5v1h-5zM460 223h2v1h-2zM468 223h2v1h-2zM459 224h4v1h-4zM470 224h1v1h-1zM458 225h5v1h-5zM471 225h1v1h-1zM462 226h7v1h-7zM472 226h1v1h-1zM462 227h1v1h-1zM465 227h1v1h-1zM468 227h1v1h-1zM472 227h1v1h-1zM462 228h1v1h-1zM465 228h1v1h-1zM467 228h2v1h-2zM472 228h1v1h-1zM462 229h1v1h-1zM464 229h5v1h-5zM472 229h1v1h-1zM459 230h1v1h-1zM462 230h7v1h-7zM471 230h1v1h-1zM459 231h1v1h-1zM464 231h2v1h-2zM471 231h1v1h-1zM460 232h1v1h-1zM470 232h1v1h-1zM461 233h2v1h-2zM468 233h2v1h-2zM463 234h5v1h-5zM493 227h2v1h-2zM493 228h2v1h-2zM493 229h2v1h-2zM490 230h8v1h-8zM490 231h8v1h-8zM493 232h2v1h-2zM493 233h2v1h-2zM493 234h2v1h-2zM524 221h9v1h-9zM524 222h1v1h-1zM532 222h1v1h-1zM524 223h1v1h-1zM532 223h1v1h-1zM524 224h1v1h-1zM532 224h1v1h-1zM524 225h1v1h-1zM532 225h1v1h-1zM524 226h1v1h-1zM532 226h1v1h-1zM524 227h1v1h-1zM532 227h1v1h-1zM524 228h1v1h-1zM532 228h1v1h-1zM524 229h1v1h-1zM532 229h1v1h-1zM524 230h1v1h-1zM532 230h1v1h-1zM524 231h1v1h-1zM532 231h1v1h-1zM524 232h1v1h-1zM532 232h1v1h-1zM524 233h1v1h-1zM532 233h1v1h-1zM524 234h9v1h-9zM553 225h4v1h-4zM553 230h4v1h-4zM601 221h15v1h-15zM601 222h1v1h-1zM614 222h2v1h-2zM601 223h1v1h-1zM615 223h1v1h-1zM601 224h1v1h-1zM615 224h1v1h-1zM601 225h1v1h-1zM615 225h1v1h-1zM601 226h1v1h-1zM615 226h1v1h-1zM601 227h1v1h-1zM615 227h1v1h-1zM601 228h1v1h-1zM615 228h1v1h-1zM601 229h1v1h-1zM615 229h1v1h-1zM601 230h1v1h-1zM615 230h1v1h-1zM601 231h1v1h-1zM615 231h1v1h-1zM601 232h1v1h-1zM615 232h1v1h-1zM601 233h15v1h-15zM601 253h1v1h-1zM601 254h2v1h-2zM601 255h1v1h-1zM603 255h1v1h-1zM601 256h1v1h-1zM604 256h1v1h-1zM601 257h1v1h-1zM605 257h1v1h-1zM601 258h1v1h-1zM606 258h1v1h-1zM601 259h1v1h-1zM607 259h1v1h-1zM601 260h1v1h-1zM608 260h1v1h-1zM601 261h1v1h-1zM609 261h1v1h-1zM601 262h1v1h-1zM610 262h1v1h-1zM601 263h1v1h-1zM611 263h1v1h-1zM601 264h1v1h-1zM608 264h5v1h-5zM601 265h1v1h-1zM605 265h1v1h-1zM608 265h1v1h-1zM601 266h1v1h-1zM604 266h2v1h-2zM608 266h1v1h-1zM601 267h1v1h-1zM603 267h1v1h-1zM606 267h1v1h-1zM609 267h1v1h-1zM601 268h2v1h-2zM606 268h1v1h-1zM609 268h1v1h-1zM601 269h1v1h-1zM607 269h1v1h-1zM610 269h1v1h-1zM607 270h1v1h-1zM610 270h1v1h-1zM608 271h2v1h-2zM773 203h2v1h-2zM777 203h1v1h-1zM772 204h1v1h-1zM774 204h2v1h-2zM777 204h1v1h-1zM775 205h3v1h-3zM774 206h4v1h-4zM774 207h4v1h-4zM738 189h6v1h-6zM738 190h6v1h-6zM753 182h9v1h-9zM753 183h9v1h-9zM753 184h1v1h-1zM761 184h1v1h-1zM753 185h1v1h-1zM761 185h1v1h-1zM753 186h1v1h-1zM761 186h1v1h-1zM753 187h1v1h-1zM761 187h1v1h-1zM753 188h1v1h-1zM761 188h1v1h-1zM753 189h1v1h-1zM761 189h1v1h-1zM753 190h9v1h-9zM771 183h2v1h-2zM777 183h2v1h-2zM772 184h2v1h-2zM776 184h2v1h-2zM773 185h4v1h-4zM774 186h2v1h-2zM773 187h4v1h-4zM772 188h2v1h-2zM776 188h2v1h-2zM771 189h2v1h-2zM777 189h2v1h-2z"/><path fill="#ffffff" d="M252 223h6v1h-6zM252 224h6v1h-6zM259 224h1v1h-1zM252 225h6v1h-6zM252 226h9v1h-9zM252 227h9v1h-9zM252 228h9v1h-9zM252 229h9v1h-9zM252 230h9v1h-9zM252 231h9v1h-9zM252 232h9v1h-9zM275 226h1v1h-1zM277 226h1v1h-1zM279 226h1v1h-1zM281 226h1v1h-1zM274 227h1v1h-1zM276 227h1v1h-1zM278 227h1v1h-1zM280 227h1v1h-1zM275 228h1v1h-1zM274 229h1v1h-1zM301 223h8v1h-8zM310 223h1v1h-1zM301 224h1v1h-1zM308 224h1v1h-1zM301 225h1v1h-1zM308 225h1v1h-1zM301 226h1v1h-1zM308 226h1v1h-1zM301 227h8v1h-8zM306 231h2v1h-2zM306 232h2v1h-2zM306 233h2v1h-2zM326 223h8v1h-8zM326 224h1v1h-1zM332 224h1v1h-1zM325 225h7v1h-7zM324 226h8v1h-8zM333 226h1v1h-1zM334 227h1v1h-1zM322 228h11v1h-11zM334 228h1v1h-1zM335 229h1v1h-1zM322 230h6v1h-6zM332 230h2v1h-2zM335 230h1v1h-1zM322 231h12v1h-12zM323 233h10v1h-10zM334 233h1v1h-1zM359 224h1v1h-1zM359 225h2v1h-2zM359 226h3v1h-3zM359 227h4v1h-4zM359 228h5v1h-5zM359 229h4v1h-4zM359 230h2v1h-2zM362 230h2v1h-2zM359 231h1v1h-1zM363 231h2v1h-2zM363 232h2v1h-2zM364 233h2v1h-2zM364 234h2v1h-2zM440 222h3v1h-3zM436 223h2v1h-2zM440 223h3v1h-3zM444 223h2v1h-2zM436 224h2v1h-2zM440 224h3v1h-3zM444 224h2v1h-2zM437 225h2v1h-2zM440 225h3v1h-3zM444 225h2v1h-2zM447 225h2v1h-2zM437 226h2v1h-2zM440 226h3v1h-3zM444 226h2v1h-2zM447 226h2v1h-2zM434 227h1v1h-1zM438 227h11v1h-11zM434 228h2v1h-2zM438 228h10v1h-10zM435 229h2v1h-2zM438 229h10v1h-10zM436 230h11v1h-11zM437 231h9v1h-9zM438 232h8v1h-8zM439 233h6v1h-6zM439 234h6v1h-6zM439 235h6v1h-6zM439 236h6v1h-6zM466 227h2v1h-2zM466 228h1v1h-1zM603 223h11v1h-11zM603 225h1v1h-1zM605 225h7v1h-7zM613 225h1v1h-1zM603 226h1v1h-1zM605 226h7v1h-7zM613 226h1v1h-1zM603 227h1v1h-1zM605 227h7v1h-7zM613 227h1v1h-1zM603 228h1v1h-1zM605 228h7v1h-7zM613 228h1v1h-1zM603 229h1v1h-1zM605 229h7v1h-7zM613 229h1v1h-1zM603 231h11v1h-11zM602 255h1v1h-1zM602 256h2v1h-2zM602 257h3v1h-3zM602 258h4v1h-4zM602 259h5v1h-5zM602 260h6v1h-6zM602 261h7v1h-7zM602 262h8v1h-8zM602 263h9v1h-9zM602 264h6v1h-6zM602 265h3v1h-3zM606 265h2v1h-2zM602 266h2v1h-2zM606 266h2v1h-2zM602 267h1v1h-1zM607 267h2v1h-2zM607 268h2v1h-2zM608 269h2v1h-2zM608 270h2v1h-2z"/><path fill="#ffff00" d="M274 226h1v1h-1zM276 226h1v1h-1zM278 226h1v1h-1zM280 226h1v1h-1zM275 227h1v1h-1zM277 227h1v1h-1zM279 227h1v1h-1zM281 227h1v1h-1zM274 228h1v1h-1zM276 228h1v1h-1zM275 229h1v1h-1zM274 230h1v1h-1zM328 230h4v1h-4z"/><path fill="#808000" d="M277 229h10v1h-10zM276 230h10v1h-10zM275 231h10v1h-10zM275 232h9v1h-9zM299 223h1v1h-1zM299 224h1v1h-1zM299 225h1v1h-1zM310 225h1v1h-1zM299 226h1v1h-1zM310 226h1v1h-1zM299 227h1v1h-1zM310 227h1v1h-1zM299 228h2v1h-2zM309 228h2v1h-2zM299 229h12v1h-12zM299 230h2v1h-2zM309 230h2v1h-2zM299 231h2v1h-2zM310 231h1v1h-1zM299 232h2v1h-2zM310 232h1v1h-1zM299 233h2v1h-2zM310 233h1v1h-1z"/><path fill="#d0cec9" d="M302 224h6v1h-6zM302 225h6v1h-6zM302 226h6v1h-6z"/><path fill="#000080" d="M395 230h1v1h-1zM393 231h3v1h-3zM394 232h3v1h-3zM395 233h3v1h-3zM396 234h2v1h-2zM419 230h1v1h-1zM417 231h3v1h-3zM418 232h3v1h-3zM419 233h3v1h-3zM420 234h2v1h-2z"/><path fill="#c0c0c0" d="M463 227h2v1h-2zM463 228h2v1h-2zM463 229h1v1h-1z"/><path fill="#a09a30" d="M494 221h10v1h-10zM494 222h1v1h-1zM503 222h1v1h-1zM494 223h1v1h-1zM503 223h1v1h-1zM494 224h1v1h-1zM503 224h1v1h-1zM494 225h1v1h-1zM503 225h1v1h-1zM494 226h1v1h-1zM503 226h1v1h-1zM503 227h1v1h-1zM503 228h1v1h-1zM495 229h9v1h-9z"/><path fill="#ffffc0" d="M495 222h8v1h-8zM495 223h1v1h-1zM502 223h1v1h-1zM495 224h8v1h-8zM495 225h1v1h-1zM502 225h1v1h-1zM495 226h8v1h-8zM495 227h8v1h-8zM495 228h8v1h-8z"/><path fill="#404040" d="M496 223h6v1h-6zM496 225h6v1h-6zM545 221h14v1h-14zM545 222h1v1h-1zM558 222h1v1h-1zM545 223h1v1h-1zM558 223h1v1h-1zM545 224h1v1h-1zM558 224h1v1h-1zM545 225h1v1h-1zM558 225h1v1h-1zM545 226h1v1h-1zM558 226h1v1h-1zM545 227h1v1h-1zM558 227h1v1h-1zM545 228h1v1h-1zM558 228h1v1h-1zM545 229h1v1h-1zM558 229h1v1h-1zM545 230h1v1h-1zM558 230h1v1h-1zM545 231h1v1h-1zM558 231h1v1h-1zM545 232h1v1h-1zM558 232h1v1h-1zM545 233h1v1h-1zM558 233h1v1h-1zM545 234h14v1h-14zM602 222h12v1h-12zM602 223h1v1h-1zM614 223h1v1h-1zM602 224h1v1h-1zM614 224h1v1h-1zM602 225h1v1h-1zM614 225h1v1h-1zM602 226h1v1h-1zM614 226h1v1h-1zM602 227h1v1h-1zM614 227h1v1h-1zM602 228h1v1h-1zM614 228h1v1h-1zM602 229h1v1h-1zM614 229h1v1h-1zM602 230h1v1h-1zM614 230h1v1h-1zM602 231h1v1h-1zM614 231h1v1h-1zM602 232h13v1h-13z"/><path fill="#0000ff" d="M489 224h1v1h-1zM489 225h1v1h-1zM490 226h1v1h-1zM491 228h1v1h-1zM495 233h2v1h-2zM496 234h3v1h-3zM501 235h2v1h-2z"/><path fill="#a0a0ff" d="M525 222h7v1h-7z"/><path fill="#90b0f0" d="M525 223h7v1h-7z"/><path fill="#90d8f0" d="M525 224h7v1h-7z"/><path fill="#a0f0e8" d="M525 225h7v1h-7z"/><path fill="#b8f0c0" d="M525 226h7v1h-7z"/><path fill="#d8f0a0" d="M525 227h7v1h-7z"/><path fill="#f0f090" d="M525 228h7v1h-7z"/><path fill="#f8f090" d="M525 229h7v1h-7z"/><path fill="#f0d898" d="M525 230h7v1h-7z"/><path fill="#f8c8a0" d="M525 231h7v1h-7z"/><path fill="#ffc0a8" d="M525 232h7v1h-7z"/><path fill="#ffb8a0" d="M525 233h7v1h-7z"/><path fill="#e0e0e0" d="M546 222h12v1h-12zM546 223h12v1h-12zM546 224h1v1h-1zM552 224h6v1h-6zM546 225h1v1h-1zM552 225h1v1h-1zM557 225h1v1h-1zM546 226h1v1h-1zM552 226h6v1h-6zM546 227h12v1h-12zM546 228h12v1h-12zM546 229h1v1h-1zM552 229h6v1h-6zM546 230h1v1h-1zM552 230h1v1h-1zM557 230h1v1h-1zM546 231h1v1h-1zM552 231h6v1h-6zM546 232h12v1h-12zM546 233h12v1h-12zM580 224h8v1h-8z"/><path fill="#e85858" d="M547 224h5v1h-5zM547 225h5v1h-5zM547 226h5v1h-5z"/><path fill="#6868e8" d="M547 229h5v1h-5zM547 230h5v1h-5zM547 231h5v1h-5z"/><path fill="#808080" d="M579 223h10v1h-10zM579 224h1v1h-1zM588 224h1v1h-1zM579 225h10v1h-10zM579 226h1v1h-1zM588 226h1v1h-1zM579 227h1v1h-1zM588 227h1v1h-1zM579 228h1v1h-1zM588 228h1v1h-1zM579 229h1v1h-1zM588 229h1v1h-1zM579 230h1v1h-1zM588 230h1v1h-1zM579 231h10v1h-10zM603 224h11v1h-11zM604 225h1v1h-1zM612 225h1v1h-1zM604 226h1v1h-1zM612 226h1v1h-1zM604 227h1v1h-1zM612 227h1v1h-1zM604 228h1v1h-1zM612 228h1v1h-1zM604 229h1v1h-1zM612 229h1v1h-1zM603 230h11v1h-11z"/><path fill="#a8a8a8" d="M580 226h8v1h-8zM580 227h8v1h-8zM580 228h8v1h-8zM580 229h8v1h-8zM580 230h8v1h-8z"/>
</svg>
</body></html>
